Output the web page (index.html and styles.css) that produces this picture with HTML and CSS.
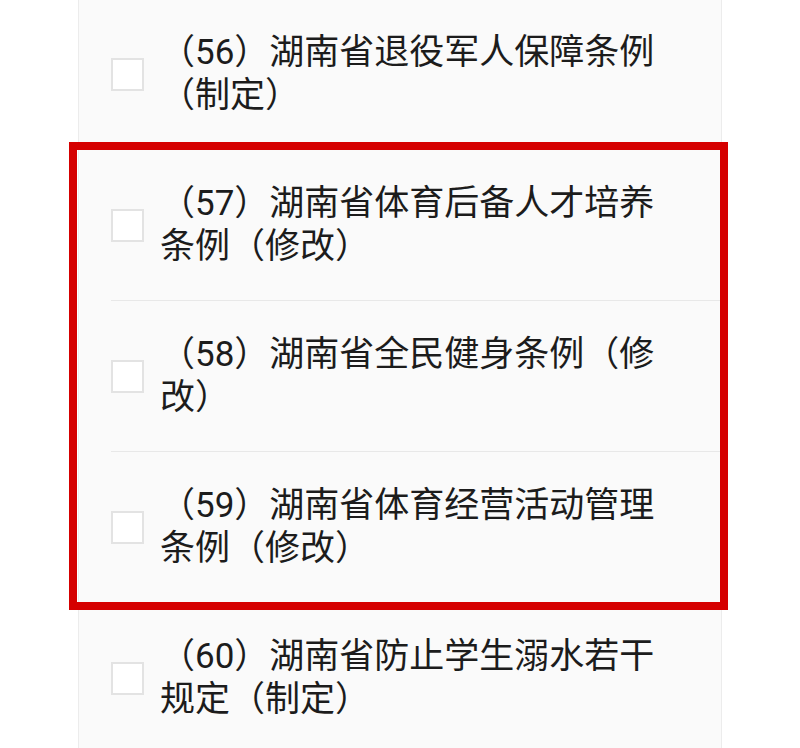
FILE: index.html
```html
<!DOCTYPE html>
<html lang="zh-CN">
<head>
<meta charset="utf-8">
<title>条例列表</title>
<link rel="stylesheet" href="styles.css">
</head>
<body>
<div class="card">
  <div class="row">
    <span class="check"></span>
    <span class="label">（56）湖南省退役军人保障条例（制定）</span>
  </div>
  <div class="group">
    <div class="row">
      <span class="check"></span>
      <span class="label">（57）湖南省体育后备人才培养条例（修改）</span>
    </div>
    <div class="row">
      <span class="check"></span>
      <span class="label">（58）湖南省全民健身条例（修改）</span>
    </div>
    <div class="row">
      <span class="check"></span>
      <span class="label">（59）湖南省体育经营活动管理条例（修改）</span>
    </div>
  </div>
  <div class="row">
    <span class="check"></span>
    <span class="label">（60）湖南省防止学生溺水若干规定（制定）</span>
  </div>
</div>
</body>
</html>
```

FILE: styles.css
```css
html, body {
  margin: 0;
  padding: 0;
  background: #ffffff;
  overflow: hidden;
}

body {
  font-family: Roboto, "Noto Sans CJK SC", sans-serif;
  color: #1c1c1c;
}

.card {
  box-sizing: border-box;
  width: 644px;
  margin: -2px 0 0 78px;
  background: #fafafa;
  border-left: 1px solid #ececec;
  border-right: 1px solid #ececec;
}

.group {
  position: relative;
}

.group::after {
  content: "";
  position: absolute;
  left: -10px;
  right: -7px;
  top: -7px;
  bottom: -8px;
  border: 8px solid #d50000;
  pointer-events: none;
}

.row {
  display: flex;
  align-items: center;
  gap: 16px;
  margin-left: 32px;
  padding: 32px 40px 32px 0;
  border-top: 1px solid #e8e8e8;
}

.check {
  flex: 0 0 auto;
  box-sizing: border-box;
  width: 33px;
  height: 33px;
  background: #ffffff;
  border: 2px solid #e3e3e3;
}

.label {
  flex: 1 1 auto;
  font-size: 35px;
  line-height: 43px;
}
```
